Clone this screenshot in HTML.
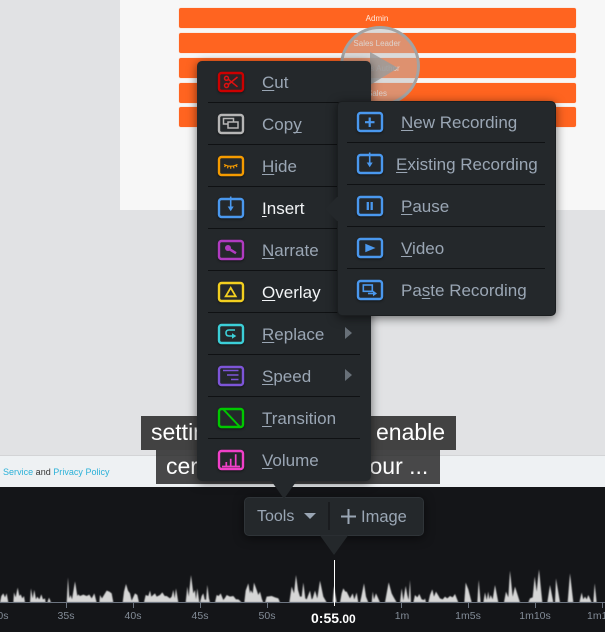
<!DOCTYPE html>
<html><head><meta charset="utf-8"><style>
html,body{margin:0;padding:0}
body{width:605px;height:632px;position:relative;overflow:hidden;background:#e1e2e4;font-family:"Liberation Sans",sans-serif}
div,span,svg{position:absolute;box-sizing:border-box}
svg{overflow:visible}
u{text-decoration-skip-ink:none;text-underline-offset:2px;text-decoration-thickness:1px}
.slide{left:120px;top:0;width:485px;height:210px;background:#f7f7f7}
.bar{left:179px;width:397px;height:20px;background:#ff6420;border-radius:2px;color:#ffe9dd;font-size:8px;line-height:21px;text-align:center;padding-right:1px;box-shadow:0 0 1px #ffb090}
.menu{background:#24282b;border-radius:5px;box-shadow:0 2px 10px rgba(0,0,0,.55)}
.sep{height:1px;background:#0f1113}
.t{font-size:17px;line-height:20px;color:#9aa6b4;white-space:nowrap}
.w{color:#f2f4f6}
.i{width:26px;height:20px;overflow:visible;filter:drop-shadow(0 1px 1px rgba(0,0,0,.5))}
.sub{color:#fff;font-size:23px;line-height:34px;white-space:nowrap}
.lbl{font-size:10.5px;color:#838c97;top:610px;width:50px;text-align:center;line-height:12px;white-space:nowrap}
.tick{width:1px;height:6px;top:602px;background:#6c7480}
</style></head><body>
<div class="slide"></div>
<div class="bar" style="top:8px">Admin</div>
<div class="bar" style="top:33px">Sales Leader</div>
<div class="bar" style="top:58px">Sales Author</div>
<div class="bar" style="top:83px">Sales</div>
<div class="bar" style="top:107px"></div>
<div style="left:340px;top:26px;width:80px;height:80px;border-radius:50%;background:rgba(190,190,190,.5);border:3px solid #a3a3a3"></div>
<svg style="left:0;top:0" width="605" height="210"><polygon points="370,52 398,68 370,85" fill="#9b9b9b" fill-opacity=".85"/></svg>

<div style="left:0;top:455px;width:605px;height:32px;background:#eef1f3;border-top:1px solid #d3d4d6"></div>
<div style="left:3px;top:466px;font-size:9px;line-height:12px;color:#333;white-space:nowrap;letter-spacing:.02px"><span style="position:static;color:#2bb1d8">Service</span> and <span style="position:static;color:#2bb1d8">Privacy Policy</span></div>
<div style="left:-9px;top:466px;font-size:9px;line-height:12px;color:#2bb1d8;white-space:nowrap">of</div>

<div style="left:141px;top:416px;width:315px;height:34px;background:rgba(30,30,30,.82)"></div>
<div style="left:156px;top:450px;width:284px;height:34px;background:rgba(30,30,30,.8)"></div>
<span class="sub" style="left:151px;top:415px">setting</span>
<span class="sub" style="left:376px;top:415px">enable</span>
<span class="sub" style="left:166px;top:449px">cer</span>
<span class="sub" style="left:358px;top:449px">your ...</span>

<div style="left:0;top:487px;width:605px;height:145px;background:#141518"></div>
<svg style="left:0;top:560px" width="605" height="72" viewBox="0 0 605 72">
<defs><filter id="b" x="-5%" y="-5%" width="110%" height="110%"><feGaussianBlur stdDeviation="1.500"/></filter></defs>
<g fill="#d6d6d6" filter="url(#b)" transform="scale(.33333)">
<polygon points="0,127 4,108 10,100 15,112 20,100 25,127"/>
<polygon points="40,127 42,97 47,112 53,83 58,108 62,103 67,115 72,108 75,127"/>
<polygon points="90,127 93,85 98,115 103,90 108,118 112,110 118,118 124,103 129,118 135,115 137,127"/>
<polygon points="142,127 147,113 153,127"/>
<polygon points="200,127 204,52 208,115 212,105 216,118 225,64 232,108 235,103 240,108 250,104 260,108 268,104 275,115 283,100 290,127"/>
<polygon points="298,127 300,105 306,115 312,105 320,92 328,95 335,100 340,127"/>
<polygon points="368,127 372,95 378,72 384,92 390,100 395,122 405,100 412,105 417,127"/>
<polygon points="432,127 437,105 445,108 450,92 454,110 465,100 470,110 480,105 487,97 494,108 500,108 510,115 515,110 520,90 524,115 528,85 535,127"/>
<polygon points="557,127 562,80 566,110 573,45 580,100 585,90 588,118 592,85 598,127"/>
<g transform="translate(600,0)">
<polygon points="0,127 5,108 10,100 14,118 18,120 22,75 27,115 30,127"/>
<polygon points="45,127 50,105 56,108 62,100 70,120 76,112 80,105 90,110 100,108 108,118 115,118 125,127"/>
<polygon points="133,127 137,92 145,70 150,100 152,90 158,100 162,68 170,90 175,105 180,95 186,118 190,127"/>
<polygon points="195,127 200,110 215,108 225,112 235,115 240,127"/>
<polygon points="268,127 275,80 282,100 288,45 294,90 300,110 305,110 310,68 316,115 320,118 330,92 335,118 338,115 345,92 352,115 360,62 370,110 380,127"/>
<polygon points="398,127 402,78 410,127"/>
<polygon points="420,127 425,100 430,85 436,95 440,95 450,115 458,100 463,118 470,98 475,127"/>
<polygon points="480,127 484,110 492,70 498,110 505,127"/>
<polygon points="515,127 518,95 522,118 528,100 540,127"/>
<polygon points="555,127 566,67 575,100 580,110 590,127"/>
</g>
<g transform="translate(1200,0)">
<polygon points="0,127 5,85 10,122 17,78 22,105 26,120 30,60 33,127"/>
<polygon points="40,127 45,105 52,112 58,102 65,118 72,120 75,115 78,127"/>
<polygon points="85,127 90,105 97,88 102,110 108,95 120,115 128,118 135,110 142,115 150,108 158,112 165,102 175,127"/>
<polygon points="193,127 197,68 205,88 215,127"/>
<polygon points="232,127 236,60 242,127"/>
<polygon points="250,127 255,97 260,120 265,95 268,118 272,105 278,118 285,75 295,127"/>
<polygon points="312,127 318,95 325,112 330,32 338,110 345,80 360,127"/>
<polygon points="385,127 390,115 398,112 404,50 410,95 417,28 427,127"/>
<polygon points="442,127 450,75 460,127"/>
<polygon points="465,127 468,55 480,127"/>
<polygon points="503,127 510,40 520,127"/>
<polygon points="538,127 545,98 550,118 555,110 560,118 565,105 575,127"/>
<polygon points="580,127 584,70 590,127"/>
</g>
</g></svg>
<div style="left:0;top:602px;width:605px;height:1px;background:#6c7480"></div>
<div class="tick" style="left:66px"></div><div class="tick" style="left:133px"></div><div class="tick" style="left:200px"></div><div class="tick" style="left:267px"></div><div class="tick" style="left:401px"></div><div class="tick" style="left:468px"></div><div class="tick" style="left:535px"></div><div class="tick" style="left:602px"></div>
<div style="left:334px;top:560px;width:1px;height:46px;background:#fff"></div>
<div class="lbl" style="left:-25px">30s</div>
<div class="lbl" style="left:41px">35s</div>
<div class="lbl" style="left:108px">40s</div>
<div class="lbl" style="left:175px">45s</div>
<div class="lbl" style="left:242px">50s</div>
<div class="lbl" style="left:377px">1m</div>
<div class="lbl" style="left:443px">1m5s</div>
<div class="lbl" style="left:510px">1m10s</div>
<div class="lbl" style="left:587px;width:auto;text-align:left">1m15s</div>
<div style="left:311px;top:610px;font-size:14px;font-weight:bold;color:#fff;line-height:16px;white-space:nowrap">0:55<span style="position:static;font-size:12px">.00</span></div>

<!-- toolbar -->
<div class="menu" style="left:244px;top:497px;width:180px;height:39px;border:1px solid #2f3438"></div>
<svg style="left:244px;top:530px" width="180" height="30"><polygon points="76,5.500 104,5.500 90,25" fill="#24282b"/></svg>
<span class="t" style="left:257px;top:507px;font-size:16px">Tools</span>
<svg style="left:300px;top:510px" width="120" height="16"><polygon points="4,3 16,3 10,9" fill="#9aa6b4"/><rect x="28.500" y="-8" width="1" height="28" fill="#0f1113"/><path d="M41 6.500H56M48.500 -1V14" stroke="#9aa6b4" stroke-width="2" fill="none"/></svg>
<span class="t" style="left:361px;top:507px;font-size:16.5px">Image</span>

<!-- main menu -->
<div class="menu" style="left:197px;top:61px;width:174px;height:420px"></div>
<svg style="left:265px;top:479px" width="40" height="24"><polygon points="5,0 33,0 19,20" fill="#24282b"/></svg>
<div class="sep" style="left:208px;top:102px;width:152px"></div>
<div class="sep" style="left:208px;top:144px;width:152px"></div>
<div class="sep" style="left:208px;top:186px;width:152px"></div>
<div class="sep" style="left:208px;top:228px;width:152px"></div>
<div class="sep" style="left:208px;top:270px;width:152px"></div>
<div class="sep" style="left:208px;top:312px;width:152px"></div>
<div class="sep" style="left:208px;top:354px;width:152px"></div>
<div class="sep" style="left:208px;top:396px;width:152px"></div>
<div class="sep" style="left:208px;top:438px;width:152px"></div>

<svg class="i" style="left:218px;top:72px" viewBox="0 0 26 20"><rect x="1" y="1" width="24" height="18" rx="2.500" fill="#2e2326" stroke="#cc0000" stroke-width="2.400"/><g fill="none" stroke="#e01010" stroke-width="1.500"><circle cx="8.500" cy="6.300" r="2"/><circle cx="8.500" cy="13.500" r="2"/><path d="M10.300 7.300L19.500 14.800M10.300 12.500L19.500 5"/></g></svg>
<span class="t" style="left:262px;top:73px"><u>C</u>ut</span>

<svg class="i" style="left:218px;top:114px" viewBox="0 0 26 20"><rect x="1" y="1" width="24" height="18" rx="2.500" fill="#24282b" stroke="#b6b6b6" stroke-width="2.400"/><g fill="#24282b" stroke="#b6b6b6" stroke-width="1.500"><rect x="5.500" y="4.500" width="10" height="5.500"/><rect x="10" y="8" width="10" height="6"/></g></svg>
<span class="t" style="left:262px;top:115px">Cop<u>y</u></span>

<svg class="i" style="left:218px;top:156px" viewBox="0 0 26 20"><rect x="1" y="1" width="24" height="18" rx="2.500" fill="#24282b" stroke="#f59b00" stroke-width="2.400"/><path d="M6 8.500Q12.700 12 19.500 8.500M7.500 9.500L6.500 11M10 10.300L9.500 12.300M12.700 10.500V12.800M15.400 10.300L16 12.300M18 9.500L19 11" fill="none" stroke="#f59b00" stroke-width="1.200"/></svg>
<span class="t" style="left:262px;top:157px"><u>H</u>ide</span>

<svg class="i" style="left:218px;top:198px" viewBox="0 0 26 20"><rect x="1" y="1" width="24" height="18" rx="2.500" fill="#24282b" stroke="#4a98ee" stroke-width="2.400"/><path d="M12.700 -1.500V10" stroke="#4a98ee" stroke-width="1.600"/><polygon points="9.700,8.500 15.700,8.500 12.700,13.300" fill="#4a98ee"/></svg>
<span class="t w" style="left:262px;top:199px"><u>I</u>nsert</span>

<svg class="i" style="left:218px;top:240px" viewBox="0 0 26 20"><rect x="1" y="1" width="24" height="18" rx="2.500" fill="#24282b" stroke="#b03bc0" stroke-width="2.400"/><circle cx="10" cy="8" r="3" fill="#b03bc0"/><path d="M12 9.500L18 13.200" stroke="#b03bc0" stroke-width="2.500"/></svg>
<span class="t" style="left:262px;top:241px"><u>N</u>arrate</span>

<svg class="i" style="left:218px;top:282px" viewBox="0 0 26 20"><rect x="1" y="1" width="24" height="18" rx="2.500" fill="#24282b" stroke="#f2cf20" stroke-width="2.400"/><polygon points="12.700,5.800 7.700,14.300 17.700,14.300" fill="none" stroke="#f2cf20" stroke-width="1.800"/></svg>
<span class="t w" style="left:262px;top:283px"><u>O</u>verlay</span>

<svg class="i" style="left:218px;top:324px" viewBox="0 0 26 20"><rect x="1" y="1" width="24" height="18" rx="2.500" fill="#24282b" stroke="#3ccfd8" stroke-width="2.400"/><path d="M17 6H11Q8 6 8 9Q8 12 11 12H15" fill="none" stroke="#3ccfd8" stroke-width="1.600"/><polygon points="14,9.200 18.300,12 14,14.800" fill="#3ccfd8"/></svg>
<span class="t" style="left:262px;top:325px"><u>R</u>eplace</span>
<svg style="left:345px;top:327px" width="8" height="12"><polygon points="0,0 7,6 0,12" fill="#687078"/></svg>

<svg class="i" style="left:218px;top:366px" viewBox="0 0 26 20"><rect x="1" y="1" width="24" height="18" rx="2.500" fill="#24282b" stroke="#7d55d8" stroke-width="2.400"/><path d="M5 4.500H20.500M9 9H20.500M13 13.500H20.500" stroke="#7d55d8" stroke-width="1.600"/></svg>
<span class="t" style="left:262px;top:367px"><u>S</u>peed</span>
<svg style="left:345px;top:369px" width="8" height="12"><polygon points="0,0 7,6 0,12" fill="#687078"/></svg>

<svg class="i" style="left:218px;top:408px" viewBox="0 0 26 20"><rect x="1" y="1" width="24" height="18" rx="2.500" fill="#24282b" stroke="#00c800" stroke-width="2.400"/><path d="M5 1L22 19" stroke="#00c800" stroke-width="2"/></svg>
<span class="t" style="left:262px;top:409px"><u>T</u>ransition</span>

<svg class="i" style="left:218px;top:450px" viewBox="0 0 26 20"><rect x="1" y="1" width="24" height="18" rx="2.500" fill="#24282b" stroke="#f040c8" stroke-width="2.400"/><path d="M8.300 17V12M12.700 17V8.700M17.700 17V4.300M4 16.500H22" stroke="#f040c8" stroke-width="1.700"/></svg>
<span class="t" style="left:262px;top:451px"><u>V</u>olume</span>

<!-- sub menu -->
<div class="menu" style="left:337px;top:101px;width:219px;height:215px;border:1px solid #1b1e20"></div>
<svg style="left:324px;top:195px" width="15" height="28"><polygon points="1,14 13,2 14,2 14,26 13,26" fill="#24282b"/></svg>
<div class="sep" style="left:347px;top:142px;width:198px"></div>
<div class="sep" style="left:347px;top:184px;width:198px"></div>
<div class="sep" style="left:347px;top:226px;width:198px"></div>
<div class="sep" style="left:347px;top:268px;width:198px"></div>

<svg class="i" style="left:357px;top:112px" viewBox="0 0 26 20"><rect x="1" y="1" width="24" height="18" rx="2.500" fill="#24282b" stroke="#4a98ee" stroke-width="2.400"/><path d="M8 10.200H17.500M12.700 5.500V15" stroke="#4a98ee" stroke-width="2.200"/></svg>
<span class="t" style="left:401px;top:113px"><u>N</u>ew Recording</span>

<svg class="i" style="left:357px;top:154px" viewBox="0 0 26 20"><rect x="1" y="1" width="24" height="18" rx="2.500" fill="#24282b" stroke="#4a98ee" stroke-width="2.400"/><path d="M12.700 -1.500V10" stroke="#4a98ee" stroke-width="1.600"/><polygon points="9.700,8.500 15.700,8.500 12.700,13.300" fill="#4a98ee"/></svg>
<span class="t" style="left:396px;top:155px"><u>E</u>xisting Recording</span>

<svg class="i" style="left:357px;top:196px" viewBox="0 0 26 20"><rect x="1" y="1" width="24" height="18" rx="2.500" fill="#24282b" stroke="#4a98ee" stroke-width="2.400"/><path d="M10.800 6V14M14.700 6V14" stroke="#4a98ee" stroke-width="2.300"/></svg>
<span class="t" style="left:401px;top:197px"><u>P</u>ause</span>

<svg class="i" style="left:357px;top:238px" viewBox="0 0 26 20"><rect x="1" y="1" width="24" height="18" rx="2.500" fill="#24282b" stroke="#4a98ee" stroke-width="2.400"/><polygon points="8.300,5.700 18.500,10 8.300,14.300" fill="#4a98ee"/></svg>
<span class="t" style="left:401px;top:239px"><u>V</u>ideo</span>

<svg class="i" style="left:357px;top:280px" viewBox="0 0 26 20"><rect x="1" y="1" width="24" height="18" rx="2.500" fill="#24282b" stroke="#4a98ee" stroke-width="2.400"/><rect x="6.300" y="5" width="9" height="6.300" fill="none" stroke="#4a98ee" stroke-width="1.600"/><path d="M11 13.500H17" stroke="#4a98ee" stroke-width="1.600"/><polygon points="16,10.500 20,13.500 16,16.300" fill="#4a98ee"/></svg>
<span class="t" style="left:401px;top:281px">Pa<u>s</u>te Recording</span>
</body></html>
